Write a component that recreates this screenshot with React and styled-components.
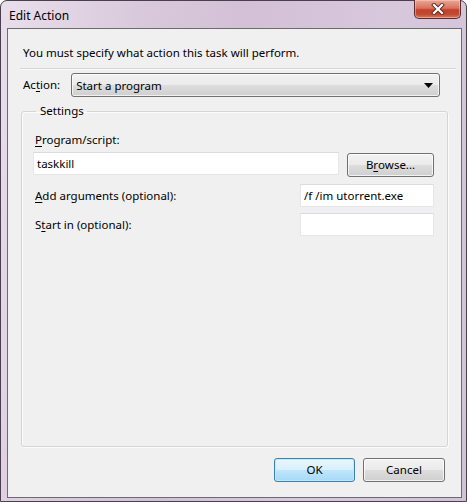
import React from "react";
import styled, { createGlobalStyle } from "styled-components";

const Global = createGlobalStyle`
  html, body { margin: 0; padding: 0; background: #ffffff; }
  body { font-family: "Noto Sans", "Open Sans", sans-serif; font-size: 11.5px; color: #000; }
`;

const Window = styled.div`
  box-sizing: border-box;
  width: 467px;
  height: 502px;
  display: flex;
  flex-direction: column;
  border: 1px solid #4a3f4e;
  border-radius: 7px 7px 0 0;
  background: linear-gradient(100deg, #e9dfeb 0%, #d9c9dc 25%, #d3c0d6 45%, #d8c8dc 70%, #d2c2d8 100%);
`;

const TitleBar = styled.div`
  height: 27px;
  display: flex;
  align-items: flex-start;
  padding-left: 8px;
`;

const Title = styled.div`
  margin-top: 7px;
  font-size: 12px;
  line-height: 16px;
  color: #000;
`;

const CloseButton = styled.div`
  box-sizing: border-box;
  margin-left: auto;
  margin-right: 5px;
  width: 47px;
  height: 19px;
  margin-top: -1px;
  border: 1px solid #5b2b2b;
  border-top: none;
  border-radius: 0 0 5px 5px;
  background: linear-gradient(180deg, #e9a796 0%, #d9735f 45%, #c5402c 55%, #c24a33 80%, #d87a5e 100%);
  box-shadow: inset 0 0 0 1px rgba(255, 220, 210, 0.45);
  display: flex;
  align-items: center;
  justify-content: center;
`;

const Client = styled.div`
  box-sizing: border-box;
  flex: 1;
  margin: 0 4px 3px 6px;
  border: 1px solid #6c6c6c;
  background: #f0f0f0;
  display: flex;
  flex-direction: column;
`;

const Instruction = styled.div`
  padding: 16px 0 0 15px;
  line-height: 16px;
  height: 16px;
`;

const Separator = styled.div`
  margin: 7px 5px 0 12px;
  height: 1px;
  background: #d5d5d5;
  border-bottom: 1px solid #fbfbfb;
`;

const ActionRow = styled.div`
  display: flex;
  align-items: center;
  margin-top: 3px;
  padding-left: 15px;
  height: 24px;
`;

const Label = styled.span`
  line-height: 16px;
  white-space: nowrap;
`;

const Key = styled.span`
  text-decoration: underline;
  text-underline-offset: 2px;
`;

const Combo = styled.div`
  box-sizing: border-box;
  margin-left: 11px;
  width: 369px;
  height: 24px;
  border: 1px solid #707070;
  border-radius: 3px;
  background: linear-gradient(180deg, #f2f2f2 0%, #ebebeb 48%, #dddddd 52%, #cfcfcf 100%);
  box-shadow: inset 0 0 0 1px rgba(255, 255, 255, 0.7);
  display: flex;
  align-items: center;
  padding: 0 6px 0 4px;
  justify-content: space-between;
`;

const Group = styled.fieldset`
  box-sizing: border-box;
  margin: 6px 13px 0 13px;
  padding: 0 13px 0 11px;
  border: 1px solid #d5d5d5;
  border-radius: 3px;
  box-shadow: inset 1px 1px 0 #fbfbfb, 1px 1px 0 #fbfbfb;
  height: 344px;
  display: flex;
  flex-direction: column;
`;

const Legend = styled.legend`
  margin-left: 3px;
  padding: 0 3px 0 4px;
  line-height: 16px;
`;

const FieldLabel = styled.div`
  padding-left: 2px;
  line-height: 16px;
  margin-top: ${(p) => p.$top || 0}px;
`;

const Row = styled.div`
  display: flex;
  align-items: ${(p) => p.$align || "center"};
  justify-content: space-between;
  margin-top: ${(p) => p.$top || 0}px;
  padding-left: ${(p) => p.$pl || 0}px;
`;

const TextBox = styled.div`
  box-sizing: border-box;
  width: ${(p) => p.$w}px;
  height: 23px;
  background: #ffffff;
  border: 1px solid #e6e6e8;
  border-top-color: #dadbe0;
  display: flex;
  align-items: center;
  padding-left: 3px;
  line-height: 16px;
  white-space: nowrap;
`;

const Button = styled.div`
  box-sizing: border-box;
  width: ${(p) => p.$w}px;
  height: 24px;
  margin-top: ${(p) => p.$mt || 0}px;
  border: 1px solid ${(p) => (p.$default ? "#3c7fb1" : "#707070")};
  border-radius: 3px;
  background: ${(p) =>
    p.$default
      ? "linear-gradient(180deg, #eaf6fd 0%, #d9f0fc 48%, #bee6fd 52%, #a7d9f5 100%)"
      : "linear-gradient(180deg, #f2f2f2 0%, #ebebeb 48%, #dddddd 52%, #cfcfcf 100%)"};
  box-shadow: inset 0 0 0 1px ${(p) => (p.$default ? "rgba(190, 235, 255, 0.9)" : "rgba(255, 255, 255, 0.75)")};
  display: flex;
  align-items: center;
  justify-content: center;
  line-height: 16px;
`;

const Footer = styled.div`
  display: flex;
  justify-content: flex-end;
  gap: 8px;
  margin: 11px 16px 0 0;
`;

function Arrow() {
  return (
    <svg width="9" height="5" viewBox="0 0 9 5">
      <polygon points="0,0 9,0 4.5,5" fill="#000" />
    </svg>
  );
}

function CloseX() {
  return (
    <svg width="14" height="12" viewBox="0 0 14 12">
      <path d="M3 2 L11 10 M11 2 L3 10" stroke="#5a2a22" strokeWidth="4" strokeLinecap="square" fill="none" />
      <path d="M3 2 L11 10 M11 2 L3 10" stroke="#ffffff" strokeWidth="2.2" strokeLinecap="square" fill="none" />
    </svg>
  );
}

export default function App() {
  return (
    <>
      <Global />
      <Window>
        <TitleBar>
          <Title>Edit Action</Title>
          <CloseButton>
            <CloseX />
          </CloseButton>
        </TitleBar>
        <Client>
          <Instruction>You must specify what action this task will perform.</Instruction>
          <Separator />
          <ActionRow>
            <Label>
              Ac<Key>t</Key>ion:
            </Label>
            <Combo>
              <span>Start a program</span>
              <Arrow />
            </Combo>
          </ActionRow>
          <Group>
            <Legend>Settings</Legend>
            <FieldLabel $top={13}>
              <Key>P</Key>rogram/script:
            </FieldLabel>
            <Row $top={4} $align="flex-start">
              <TextBox $w={306}>taskkill</TextBox>
              <Button $w={87} $mt={1}>
                B<Key>r</Key>owse...
              </Button>
            </Row>
            <Row $top={7} $pl={2}>
              <Label>
                <Key>A</Key>dd arguments (optional):
              </Label>
              <TextBox $w={134}>/f /im utorrent.exe</TextBox>
            </Row>
            <Row $top={6} $pl={2}>
              <Label>
                S<Key>t</Key>art in (optional):
              </Label>
              <TextBox $w={134} />
            </Row>
          </Group>
          <Footer>
            <Button $w={81} $default>
              OK
            </Button>
            <Button $w={82}>Cancel</Button>
          </Footer>
        </Client>
      </Window>
    </>
  );
}
